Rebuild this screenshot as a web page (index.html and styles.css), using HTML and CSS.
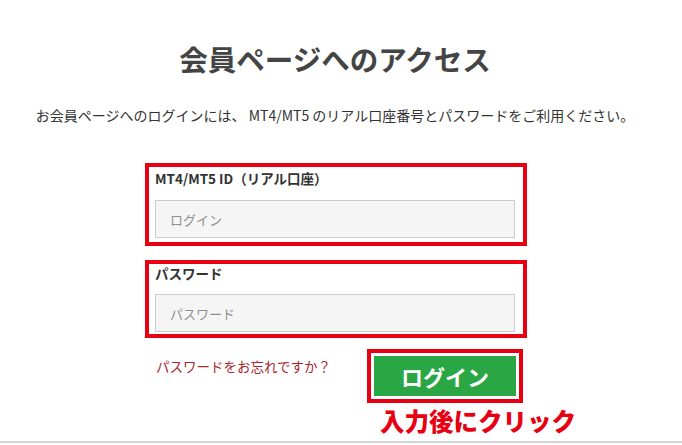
FILE: index.html
```html
<!DOCTYPE html>
<html lang="ja">
<head>
    <meta charset="UTF-8">
    <meta name="viewport" content="width=device-width, initial-scale=1.0">
    <title>会員ページへのアクセス</title>
    <link rel="stylesheet" href="styles.css">
</head>
<body>
    <div class="page">
        <h1 class="title">会員ページへのアクセス</h1>
        <p class="lead">お会員ページへのログインには、 MT4/MT5 のリアル口座番号とパスワードをご利用ください。</p>

        <form class="login-form" onsubmit="return false;">
            <div class="field-box">
                <label class="field-label" for="login">MT4/MT5 ID（リアル口座）</label>
                <input class="field-input" type="text" id="login" placeholder="ログイン">
            </div>

            <div class="field-box field-box--second">
                <label class="field-label" for="password">パスワード</label>
                <input class="field-input" type="password" id="password" placeholder="パスワード">
            </div>

            <div class="actions">
                <a class="forgot" href="#">パスワードをお忘れですか？</a>
                <div class="submit-col">
                    <div class="submit-frame">
                        <button class="submit-btn" type="submit">ログイン</button>
                    </div>
                    <p class="note">入力後にクリック</p>
                </div>
            </div>
        </form>
    </div>
</body>
</html>
```

FILE: styles.css
```css
body {
    margin: 0;
    padding: 0;
    background-color: #fff;
    font-family: "Noto Sans CJK JP", "Noto Sans", sans-serif;
    color: #333;
}

.page {
    width: 670px;
    padding: 39px 12px 7px 0;
    border-bottom: 2px solid #d4d4d4;
}

.title {
    margin: 0;
    font-size: 28.5px;
    line-height: 40px;
    font-weight: 700;
    color: #444;
    text-align: center;
}

.lead {
    margin: 26px 0 0;
    font-size: 14px;
    line-height: 20px;
    text-align: center;
    white-space: nowrap;
    color: #333;
}

.login-form {
    width: 382px;
    margin: 38px auto 0;
    padding-left: 2px;
}

.field-box {
    border: 4px solid #e60012;
    padding: 2px 8px 4px 6px;
}

.field-box--second {
    margin-top: 14px;
    padding-top: 0;
    padding-bottom: 2px;
}

.field-label {
    display: block;
    font-size: 13.5px;
    line-height: 18px;
    font-weight: 700;
    color: #333;
}

.field-input {
    display: block;
    box-sizing: border-box;
    width: 100%;
    height: 38px;
    margin-top: 13px;
    padding: 0 14px;
    border: 1px solid #c9cdd1;
    background-color: #f5f5f5;
    font-family: inherit;
    font-size: 13px;
    color: #333;
}

.field-box--second .field-input {
    margin-top: 12px;
}

.field-input::placeholder {
    color: #8f8f8f;
}

.actions {
    display: flex;
    justify-content: space-between;
    margin-top: 11px;
    padding: 0 4px 0 11px;
}

.forgot {
    margin-top: 8px;
    font-size: 13.5px;
    line-height: 18px;
    white-space: nowrap;
    color: #a8262f;
    text-decoration: none;
}

.submit-col {
    flex-shrink: 0;
}

.submit-frame {
    width: fit-content;
    border: 4px solid #e60012;
    padding: 3px;
    background-color: #fff;
}

.submit-btn {
    display: block;
    width: 142px;
    height: 40px;
    border: none;
    background-color: #2ba645;
    color: #fff;
    font-family: inherit;
    font-size: 22px;
    font-weight: 700;
    cursor: pointer;
}

.note {
    margin: 5px -80px 0 13px;
    font-size: 24.5px;
    line-height: 26px;
    font-weight: 900;
    white-space: nowrap;
    color: #e60012;
}
```
